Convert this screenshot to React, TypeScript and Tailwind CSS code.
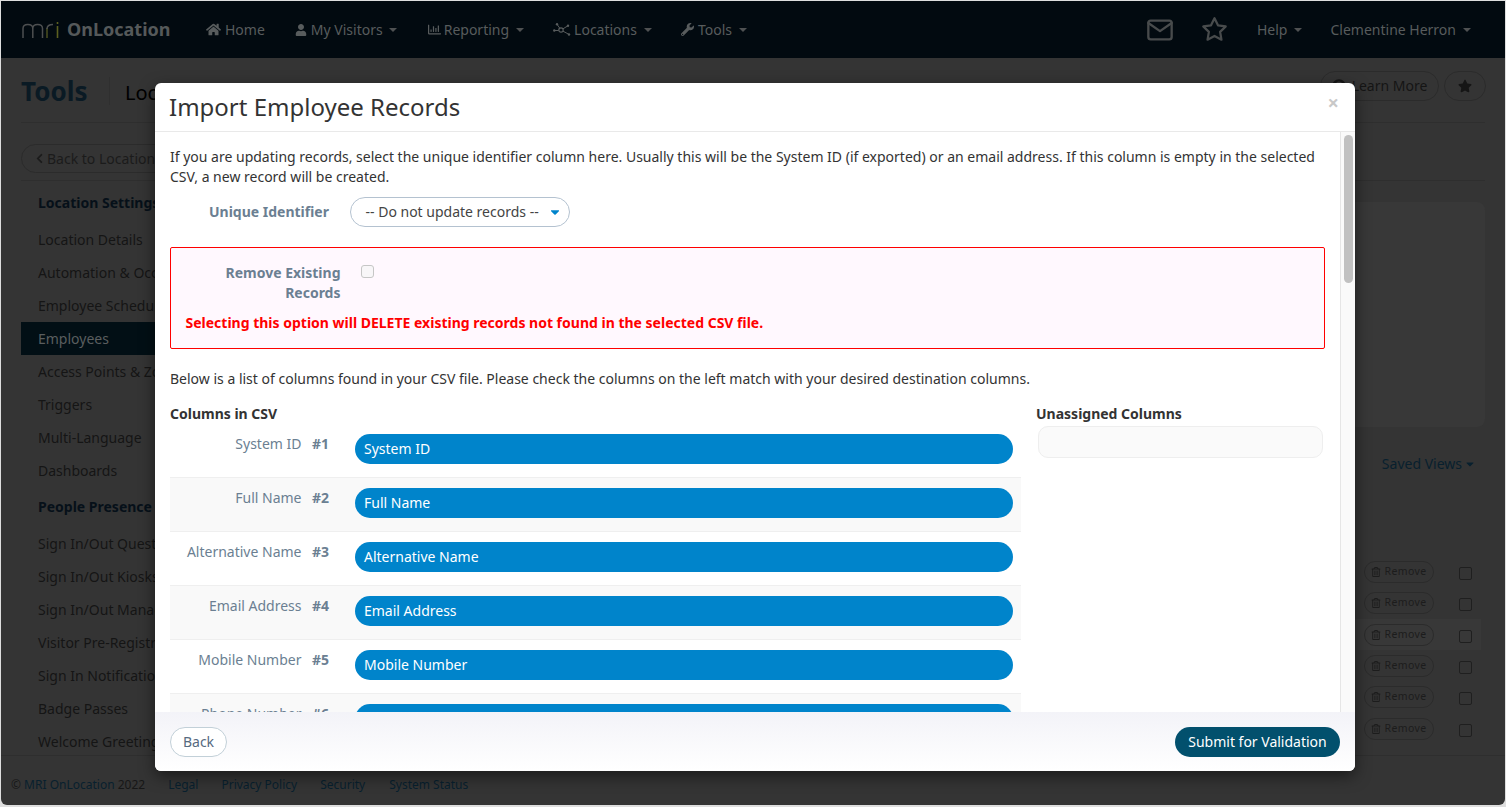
import React from "react";
import { FaHome, FaUser, FaRegChartBar, FaWrench, FaChevronLeft, FaStar, FaRegTrashAlt, FaCaretDown, FaQuestionCircle } from "react-icons/fa";
import { FiMail, FiStar } from "react-icons/fi";

const font = { fontFamily: '"Noto Sans", sans-serif' };

function Caret({ tight }: { tight?: boolean }) {
  return <span className={`inline-block w-0 h-0 border-x-[4px] border-x-transparent border-t-[4px] align-middle text-[#4f5152] ${tight ? "ml-[3px]" : "ml-[4px]"}`} style={{ borderTopColor: "currentColor" }} />;
}

function NavItem({ icon, label, caret, tight, className }: { icon?: React.ReactNode; label: string; caret?: boolean; tight?: boolean; className: string }) {
  return (
    <div className={`flex items-center gap-[3px] text-[14px] text-[#585c5d] ${className}`}>
      {icon}
      <span>{label}</span>
      {caret && <Caret tight={tight} />}
    </div>
  );
}

function Logo() {
  return (
    <svg width="40" height="18" viewBox="0 0 40 18" fill="none" className="mt-[1px]">
      <path d="M2 17V7.5C2 4.8 4 3.5 6.8 3.5S11.8 4.8 11.8 7.5V17M11.8 7.5C11.8 4.8 13.8 3.5 16.6 3.5S21.5 4.8 21.5 7.5V17" stroke="#4d4f50" strokeWidth="1.5" />
      <path d="M26 17V7" stroke="#4c5020" strokeWidth="1.5" />
      <path d="M26 8C26 5 28.2 3.5 32 3.5" stroke="#4d4f50" strokeWidth="1.5" />
      <path d="M36.5 1V3M36.5 5V17" stroke="#5c6020" strokeWidth="1.6" />
    </svg>
  );
}

const sideA = ["Location Details", "Automation & Occupancy", "Employee Schedules", "Employees", "Access Points & Zones", "Triggers", "Multi-Language", "Dashboards"];
const sideB = ["Sign In/Out Questions", "Sign In/Out Kiosks", "Sign In/Out Manager", "Visitor Pre-Registration", "Sign In Notifications", "Badge Passes", "Welcome Greeting"];
const removeRows = [0, 1, 2, 3, 4, 5];
const cols = ["System ID", "Full Name", "Alternative Name", "Email Address", "Mobile Number", "Phone Number"];

function SideItem({ label }: { label: string }) {
  const active = label === "Employees";
  return (
    <div className={`h-[33px] flex items-center pl-[17px] text-[14px] whitespace-nowrap ${active ? "bg-[#020f15] text-[#5a5e5f]" : "text-[#151515]"}`}>{label}</div>
  );
}

function RemoveBtn() {
  return (
    <div className="w-[70px] h-[22px] rounded-full border border-[#2b2b2b] flex items-center justify-center gap-[3px] text-[10.5px] tracking-[0.4px] text-[#1c1c1c]">
      <FaRegTrashAlt className="text-[10px]" />
      <span>Remove</span>
    </div>
  );
}

function Background() {
  return (
    <div className="h-full flex flex-col bg-[#343434] rounded-b-[6px] overflow-hidden">
      <header className="h-[57px] shrink-0 bg-[#020a10] flex items-center pl-[20px] pr-[34px]">
        <Logo />
        <span className="ml-[6px] text-[18px] font-bold text-[#55595a] w-[104px]">OnLocation</span>
        <NavItem className="ml-[35px]" icon={<FaHome className="text-[15px] mr-[1px]" />} label="Home" />
        <NavItem className="ml-[30px]" icon={<FaUser className="text-[12px] mr-[1px]" />} label="My Visitors" caret tight />
        <NavItem className="ml-[31px]" icon={<FaRegChartBar className="text-[13px]" />} label="Reporting" caret />
        <NavItem
          className="ml-[29px]"
          icon={
            <svg width="18" height="14" viewBox="0 0 18 14" fill="none" stroke="#585c5d">
              <circle cx="8" cy="7" r="2.2" strokeWidth="1.2" />
              <path d="M4.2 1.6L6.8 5.2M14.6 3L10 5.8M1.5 7.5H5.6M15.6 11.2L10 8.2" strokeWidth="1" />
              <circle cx="4" cy="1.3" r="1.2" fill="#585c5d" stroke="none" />
              <circle cx="15" cy="2.7" r="1.2" fill="#585c5d" stroke="none" />
              <circle cx="1.3" cy="7.5" r="1.2" fill="#585c5d" stroke="none" />
              <circle cx="16" cy="11.5" r="1.2" fill="#585c5d" stroke="none" />
            </svg>
          }
          label="Locations"
          caret
        />
        <NavItem className="ml-[29px]" icon={<FaWrench className="text-[13px] mr-[1px]" />} label="Tools" caret />
        <div className="flex-1" />
        <FiMail className="text-[28px] text-[#484b4c]" />
        <FiStar className="text-[27px] text-[#484b4c] ml-[27px]" />
        <NavItem className="ml-[29px]" label="Help" caret />
        <NavItem className="ml-[28px]" label="Clementine Herron" caret />
      </header>

      <div className="flex-1 min-h-0 flex flex-col px-[20px]">
        <div className="h-[65px] shrink-0 flex items-center border-b border-[#2e2e2e]">
          <span className="text-[26px] font-bold text-[#0a1a24] w-[88px] mt-[2px]">Tools</span>
          <div className="h-[28px] border-l border-[#2f2f2f] mr-[15px] mt-[2px]" />
          <span className="text-[20px] text-black mt-[6px]">Location Settings</span>
          <div className="flex-1" />
          <div className="h-[30px] w-[119px] rounded-full border border-[#2b2b2b] flex items-center justify-center gap-[6px] text-[14px] text-[#151515] mt-[-9px]">
            <FaQuestionCircle className="text-[14px]" />
            Learn More
          </div>
          <div className="h-[30px] w-[42px] ml-[5px] mr-[-1px] rounded-full border border-[#2b2b2b] flex items-center justify-center text-[#151515] mt-[-9px]">
            <FaStar className="text-[14px]" />
          </div>
        </div>
        <div className="h-[58px] shrink-0 flex items-center border-b border-[#2e2e2e]">
          <div className="h-[29px] w-[170px] rounded-full border border-[#2b2b2b] flex items-center pl-[12px] gap-[2px] text-[14px] text-[#1b1b1b] mt-[13px]">
            <FaChevronLeft className="text-[11px]" />
            Back to Locations
          </div>
        </div>

        <div className="flex-1 min-h-0 flex">
          <aside className="w-[200px] shrink-0 overflow-hidden">
            <div className="h-[42px] flex items-center pl-[17px] text-[14px] font-bold text-[#061019] whitespace-nowrap">Location Settings</div>
            {sideA.map((s) => <SideItem key={s} label={s} />)}
            <div className="h-[40px] pb-[1px] flex items-center pl-[17px] text-[14px] font-bold text-[#061019] whitespace-nowrap">People Presence</div>
            {sideB.map((s) => <SideItem key={s} label={s} />)}
          </aside>
          <main className="flex-1 flex flex-col items-end pt-[21px]">
            <div className="w-[146px] h-[225px] rounded-[8px] bg-[#383838]" />
            <div className="mt-[26px] mr-[9px] text-[14px] text-[#08202e] flex items-center">Saved Views<FaCaretDown className="text-[12px] ml-[2px]" /></div>
            <div className="mt-[82.4px] w-full pr-[4px] flex flex-col">
              {removeRows.map((r) => (
                <div key={r} className={`h-[31.3px] flex items-center justify-end pr-[9px] ${r === 2 ? "bg-[#383838]" : ""}`}>
                  <RemoveBtn />
                  <div className="w-[13px] h-[13px] ml-[25px] rounded-[2px] border border-[#1f1f1f] mt-[3px]" />
                </div>
              ))}
            </div>
          </main>
        </div>
      </div>

      <footer className="h-[50px] shrink-0 border-t border-[#2e2e2e] flex items-center pl-[10px] pt-[8px] text-[12px] text-[#171717]">
        <span>© <span className="text-[#08202e]">MRI OnLocation</span> 2022</span>
        <span className="ml-[23px] text-[#08202e]">Legal</span>
        <span className="ml-[23px] text-[#08202e]">Privacy Policy</span>
        <span className="ml-[23px] text-[#08202e]">Security</span>
        <span className="ml-[24px] text-[#08202e]">System Status</span>
      </footer>
    </div>
  );
}

function ColumnRow({ label, n, i }: { label: string; n: number; i: number }) {
  const stripe = i % 2 === 1 ? "bg-[#f9f9f9]" : "";
  const line = i === 0 ? "border-transparent" : "border-[#efefef]";
  return (
    <div className={`h-[54px] shrink-0 flex items-start pt-[10px] border-t ${line} ${stripe}`}>
      <div className="w-[131.5px] text-right text-[14px] leading-[20px] text-[#6b7f92]">{label}</div>
      <div className="w-[28px] ml-[10.5px] text-[14px] leading-[20px] font-bold text-[#6b7f92]">#{n}</div>
      <div className="ml-[15px] w-[658px] h-[30px] pb-[2px] rounded-full bg-[#0084cb] text-white text-[14px] flex items-center pl-[9px]">{label}</div>
    </div>
  );
}

function Modal() {
  return (
    <div className="absolute left-[155px] top-[83px] w-[1200px] h-[688px] bg-white rounded-[6px] flex flex-col overflow-hidden shadow-[0_5px_15px_rgba(0,0,0,0.5)]">
      <div className="h-[49px] shrink-0 border-b border-[#e9e9e9] flex items-center pl-[14px] pr-[16px]">
        <span className="text-[24px] text-[#333]">Import Employee Records</span>
        <div className="flex-1" />
        <span className="text-[20px] font-bold text-[#c8c8c8] mt-[-9px] leading-none">×</span>
      </div>
      <div className="flex-1 min-h-0 flex">
        <div className="flex-1 min-w-0 overflow-hidden pl-[15px] pr-[15px] pt-[15px]">
          <p className="text-[14px] leading-[20px] text-[#333]">
            If you are updating records, select the unique identifier column here. Usually this will be the System ID (if exported) or an email address. If this column is empty in the selected CSV, a new record will be created.
          </p>
          <div className="mt-[10px] flex items-center">
            <div className="w-[159px] pb-[2px] text-right text-[14px] font-bold text-[#6b7f92]">Unique Identifier</div>
            <div className="ml-[21px] w-[220px] h-[30px] pb-[2px] rounded-full border border-[#b4c2d0] flex items-center pl-[14.5px] text-[14px] text-[#444]">
              -- Do not update records --
              <FaCaretDown className="ml-auto mr-[7px] mt-[2px] text-[14px] text-[#0084cb]" />
            </div>
          </div>
          <div className="mt-[20px] h-[102px] rounded-[2px] border border-[#f00] bg-[#fff8fe] pt-[15px] pl-[14.5px]">
            <div className="flex items-start">
              <div className="w-[155px] text-right text-[14px] leading-[20px] font-bold text-[#6b7f92]">
                Remove Existing<br />Records
              </div>
              <div className="ml-[20.5px] mt-[2px] w-[13px] h-[13px] rounded-[3px] border border-[#c6c6c6] bg-[#f8f6f8]" />
            </div>
            <div className="mt-[10px] text-[14px] leading-[20px] font-bold text-[#f00]">
              Selecting this option will DELETE existing records not found in the selected CSV file.
            </div>
          </div>
          <p className="mt-[20px] text-[14px] leading-[20px] text-[#333]">
            Below is a list of columns found in your CSV file. Please check the columns on the left match with your desired destination columns.
          </p>
          <div className="mt-[15px] flex items-start">
            <div className="w-[851px] shrink-0 flex flex-col">
              <div className="text-[14px] leading-[20px] font-bold text-[#333]">Columns in CSV</div>
              <div className="flex flex-col mt-[-1px]">
                {cols.map((c, i) => <ColumnRow key={c} label={c} n={i + 1} i={i} />)}
              </div>
            </div>
            <div className="ml-[15px] flex-1">
              <div className="text-[14px] leading-[20px] font-bold text-[#333]">Unassigned Columns</div>
              <div className="mt-[2px] mx-[2px] h-[32px] rounded-[10px] border border-[#eeeeee] bg-[#fafafa]" />
            </div>
          </div>
        </div>
        <div className="w-[15px] shrink-0 border-l border-[#e6e6e6] bg-[#fafafa] pt-[3px] pl-[3px]">
          <div className="w-[9px] h-[148px] rounded-full bg-[#c1c1c1]" />
        </div>
      </div>
      <div className="h-[59px] shrink-0 bg-gradient-to-b from-[#f3f3f8] to-white flex items-center justify-between px-[15px]">
        <div className="w-[57px] h-[30px] rounded-full border border-[#c2d0d8] bg-white flex items-center justify-center text-[14px] text-[#566a80]">Back</div>
        <div className="w-[165px] h-[30px] rounded-full bg-[#02506d] flex items-center justify-center text-[14px] text-white">Submit for Validation</div>
      </div>
    </div>
  );
}

export default function App() {
  return (
    <div style={font} className="relative w-[1506px] h-[807px] overflow-hidden bg-[#dedede] p-px pb-[2px]">
      <Background />
      <Modal />
    </div>
  );
}
